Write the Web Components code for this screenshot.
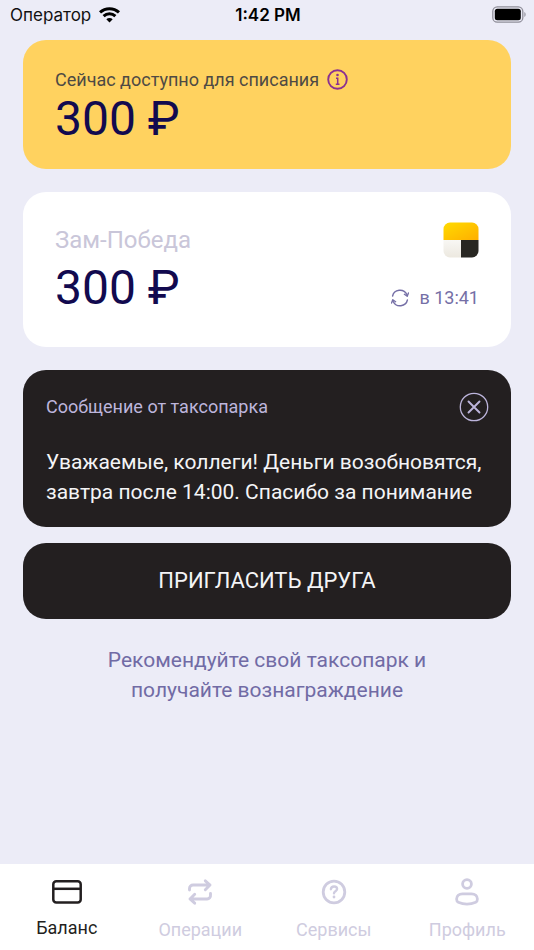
<!DOCTYPE html>
<html lang="ru">
<head>
<meta charset="utf-8">
<meta name="viewport" content="width=device-width, initial-scale=1">
<title>Баланс</title>
<style>
  html { background: #ececf7; }
  body { margin: 0; font-family: Roboto, "Liberation Sans", sans-serif; }
</style>
</head>
<body>
<taxi-app></taxi-app>

<script>
const define = (name, html, setup) => {
  const template = document.createElement('template');
  template.innerHTML = html;
  customElements.define(name, class extends HTMLElement {
    constructor() {
      super();
      this.attachShadow({ mode: 'open' }).append(template.content.cloneNode(true));
    }
    connectedCallback() {
      if (setup) setup(this, this.shadowRoot);
    }
  });
};

define('status-bar', `
  <style>
    :host { display: grid; grid-template-columns: 1fr auto 1fr; align-items: center; height: 30px; padding: 0 8px 0 10px; font: 17px/20px Inter, Roboto, sans-serif; color: #111; }
    .carrier { display: flex; align-items: center; gap: 8px; }
    .time { font-weight: 600; color: #000; }
    .battery { justify-self: end; }
    svg { display: block; }
  </style>
  <span class="carrier">Оператор
    <svg width="21" height="16" viewBox="0 0 21 16" aria-hidden="true">
      <g fill="none" stroke="#000" stroke-width="3">
        <path d="M1 5.4C6.4.4 14.6.4 20 5.4"/>
        <path d="M4.6 9.2c3.4-3.2 8.400-3.200 11.800 0"/>
      </g>
      <path d="M7.300 12.200c1.900-1.700 4.500-1.700 6.400 0L10.500 15.500z"/>
    </svg>
  </span>
  <span class="time">1:42 PM</span>
  <svg class="battery" width="34" height="18" viewBox="0 0 34 18" role="img" aria-label="Батарея заряжена">
    <rect x=".8" y=".8" width="30" height="15.400" rx="4.500" fill="none" stroke="#8f8e99" stroke-width="1.300"/>
    <rect x="2.800" y="2.800" width="26" height="11.400" rx="2.500"/>
    <path d="M32.400 6v5c1.600-.8 1.600-4.200 0-5z" fill="#8f8e99"/>
  </svg>
`);

define('info-card', `
  <style>
    :host { display: block; border-radius: 23px; background: #fff; color: #120a4f; padding: 29px 32px 22px; }
    :host([tone="gold"]) { background: #ffd25f; }
    :host([tone="dark"]) { background: #231f20; color: #f4f4f6; padding: 20px 22px 20px 23px; }
  </style>
  <slot></slot>
`);

define('money-amount', `
  <style>
    :host { display: block; font-size: 48px; line-height: 56px; color: #120a4f; white-space: nowrap; }
  </style>
  <slot></slot>
`);

define('available-balance', `
  <style>
    :host { display: block; }
    .label { display: flex; align-items: center; gap: 8px; font-size: 18px; line-height: 22px; color: #4e4a44; }
    button { display: block; padding: 0 0 1px; border: 0; background: none; color: #8b3191; }
    svg { display: block; }
  </style>
  <info-card tone="gold">
    <div class="label"><span>Сейчас доступно для списания</span>
      <button type="button" aria-label="Подробнее">
        <svg width="21" height="21" viewBox="0 0 21 21" fill="none" stroke="currentColor">
          <circle cx="10.500" cy="10.500" r="9.300" stroke-width="1.900"/>
          <path d="M9 9.200h1.700v6M8.800 15.200h3.700" stroke-width="1.500"/>
          <circle cx="10.500" cy="6" r="1.300" fill="currentColor" stroke="none"/>
        </svg>
      </button>
    </div>
    <money-amount>300 ₽</money-amount>
  </info-card>
`);

define('park-balance', `
  <style>
    :host { display: block; }
    .row { display: flex; justify-content: space-between; align-items: center; }
    .name { font-size: 24px; line-height: 38px; color: #c9c6d9; }
    .sync { display: flex; align-items: center; gap: 10px; padding: 20px 0 0; border: 0; background: none; font: inherit; font-size: 18px; line-height: 20px; color: #756fa6; }
    svg { display: block; }
    .bottom { padding: 1px 0 9px; }
  </style>
  <info-card>
    <div class="row">
      <span class="name">Зам-Победа</span>
      <svg width="36" height="36" viewBox="0 0 36 36" role="img" aria-label="Яндекс Такси">
        <defs>
          <linearGradient id="y" x1="0" y1="0" x2="1" y2="1"><stop stop-color="#ffdc00"/><stop offset="1" stop-color="#ffae00"/></linearGradient>
          <linearGradient id="w" x1="0" y1="0" x2="0" y2="1"><stop stop-color="#f8f7f4"/><stop offset="1" stop-color="#ece8df"/></linearGradient>
          <clipPath id="r"><rect x=".5" y=".5" width="35" height="35" rx="6.500"/></clipPath>
        </defs>
        <g clip-path="url(#r)">
          <path fill="url(#y)" d="M0 0h36v18H0z"/>
          <path fill="url(#w)" d="M0 18h18v18H0z"/>
          <path fill="#282722" d="M18 18h18v18H18z"/>
        </g>
      </svg>
    </div>
    <div class="row bottom">
      <money-amount>300 ₽</money-amount>
      <button class="sync" type="button">
        <svg width="18" height="18" viewBox="0 0 18 18" fill="none" stroke="currentColor" stroke-width="1.400" stroke-linecap="round" stroke-linejoin="round" aria-hidden="true">
          <path d="M1.600 7C3 .400 12.600-1.200 16 5.800M16.400 11C15 17.600 5.400 19.200 2 12.200"/>
          <path d="M13.400 5.300l2.800 2 1.300-3.400M4.600 12.700l-2.800-2L.5 14.100"/>
        </svg>
        <span>в 13:41</span>
      </button>
    </div>
  </info-card>
`);

define('park-message', `
  <style>
    :host { display: block; }
    header { display: flex; justify-content: space-between; align-items: center; }
    h2 { margin: 0; font-size: 18px; line-height: 24px; font-weight: 400; color: #bdb5dc; }
    button { display: block; padding: 2px 0; border: 0; background: none; color: #bdb5dc; }
    svg { display: block; }
    p { margin: 23px 0 0; font-size: 21px; line-height: 30px; }
  </style>
  <info-card tone="dark">
    <header>
      <h2>Сообщение от таксопарка</h2>
      <button type="button" aria-label="Закрыть">
        <svg width="30" height="30" viewBox="0 0 30 30" fill="none" stroke="currentColor" stroke-linecap="round">
          <circle cx="15" cy="15" r="13.700" stroke-width="1.300"/>
          <path d="M9.500 9.500l11 11M20.500 9.500l-11 11" stroke-width="1.900"/>
        </svg>
      </button>
    </header>
    <p><slot></slot></p>
  </info-card>
`);

define('invite-friend', `
  <style>
    :host { display: block; }
    button { display: block; width: 100%; padding: 24px; border: 0; border-radius: 23px; background: #231f20; color: #f4f4f6; font: inherit; font-size: 22px; line-height: 28px; text-transform: uppercase; }
    p { margin: 26px 0 0; padding: 0 64px; text-align: center; font-size: 21px; line-height: 30px; color: #716ba5; }
  </style>
  <button type="button">Пригласить друга</button>
  <p>Рекомендуйте свой таксопарк и получайте вознаграждение</p>
`);

define('nav-item', `
  <style>
    :host { display: block; flex: 1; color: #cfcce0; }
    :host([current]) { color: #231f20; }
    a { display: flex; flex-direction: column; align-items: center; gap: 10px; padding: 11px 0 9px; color: inherit; text-decoration: none; font-size: 18px; line-height: 22px; }
    :host([current]) a { gap: 8px; }
    ::slotted(svg) { display: block; }
  </style>
  <a href="#"><slot name="icon"></slot><slot></slot></a>
`, (host, root) => {
  if (host.hasAttribute('current')) root.querySelector('a').setAttribute('aria-current', 'page');
});

define('tab-bar', `
  <style>
    :host { display: block; background: #fff; }
    nav { display: flex; }
  </style>
  <nav>
    <nav-item current>
      <svg slot="icon" width="34" height="34" viewBox="0 0 34 34" fill="none" stroke="currentColor" stroke-width="2.500" aria-hidden="true">
        <rect x="3.300" y="6.300" width="27.400" height="21.200" rx="3"/><path d="M3.300 13.800h27.400"/>
      </svg>Баланс
    </nav-item>
    <nav-item>
      <svg slot="icon" width="34" height="34" viewBox="0 0 34 34" fill="none" stroke="currentColor" stroke-width="2.900" stroke-linecap="round" stroke-linejoin="round" aria-hidden="true">
        <path d="M6.500 15v-1.500a3.500 3.500 0 0 1 3.500-3.500h17M22.300 5.800L27 10l-4.700 4.700M27.500 18.500V20a3.500 3.500 0 0 1-3.500 4H7M11.700 19.300L7 24l4.700 4.200"/>
      </svg>Операции
    </nav-item>
    <nav-item>
      <svg slot="icon" width="34" height="34" viewBox="0 0 34 34" fill="none" stroke="currentColor" stroke-width="2.800" stroke-linecap="round" stroke-linejoin="round" aria-hidden="true">
        <circle cx="17" cy="17" r="10.800"/>
        <path d="M13.900 14.200c.3-3.700 6.200-3.500 6.200-.1 0 2-3.100 2.300-3.100 4.100" stroke-width="2.400"/>
        <circle cx="17" cy="22" r="1.400" fill="currentColor" stroke="none"/>
      </svg>Сервисы
    </nav-item>
    <nav-item>
      <svg slot="icon" width="34" height="34" viewBox="0 0 34 34" fill="none" stroke="currentColor" stroke-width="2.800" stroke-linejoin="round" aria-hidden="true">
        <circle cx="17" cy="9" r="4.400"/>
        <path d="M12.500 18.800h9c3.600 0 5.900 2.300 5.900 5.300 0 1.800-.4 2.700-1.600 3.200-5.200 2.200-12.400 2.200-17.600 0-1.200-.5-1.600-1.400-1.600-3.200 0-3 2.300-5.300 5.900-5.300z"/>
      </svg>Профиль
    </nav-item>
  </nav>
`);

define('taxi-app', `
  <style>
    :host { display: flex; flex-direction: column; min-height: 100vh; background: #ececf7; }
    main { flex: 1; display: flex; flex-direction: column; gap: 23px; padding: 10px 23px 24px; }
    .promo { display: flex; flex-direction: column; gap: 16px; }
  </style>
  <status-bar></status-bar>
  <main>
    <available-balance></available-balance>
    <park-balance></park-balance>
    <div class="promo">
      <park-message>Уважаемые, коллеги! Деньги возобновятся, завтра после 14:00. Спасибо за понимание</park-message>
      <invite-friend></invite-friend>
    </div>
  </main>
  <tab-bar></tab-bar>
`);
</script>
</body>
</html>
